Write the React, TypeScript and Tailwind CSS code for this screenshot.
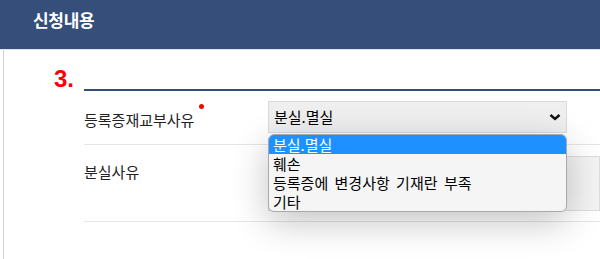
const KR = "font-['Noto_Sans_CJK_KR','Noto_Sans',sans-serif]";

const OPTIONS = ['분실.멸실', '훼손', '등록증에 변경사항 기재란 부족', '기타'];

export default function App() {
  return (
    <div className={`relative w-[600px] h-[259px] overflow-hidden bg-white ${KR}`}>
      <div className="h-[50px] bg-[#354e7a] border-b border-[#dde2ea] pl-[33px] pt-[10px]">
        <h2 className="text-white text-[17px] font-bold leading-[20px] tracking-[-0.3px]">신청내용</h2>
      </div>

      <div className="ml-[3px] border-l border-[#d4d4d4] h-[209px] pl-[50px]">
        <div className="flex items-end pt-[17px]">
          <span className="w-[30px] text-[#ff0000] text-[24px] font-bold leading-[24px] font-['Liberation_Sans',sans-serif]">3.</span>
          <div className="flex-1 border-b-2 border-[#354e7a]" />
        </div>

        <div className="ml-[30px]">
          <div className="flex items-center h-[54px] border-b border-[#e6e6e6]">
            <div className="w-[184px] shrink-0 pt-[3px]">
              <span className="relative text-[15px] leading-[20px] text-[#222]">
                등록증재교부사유
                <span className="absolute -right-[10px] -top-[5px] w-[5px] h-[5px] rounded-full bg-[#ff0000]" />
              </span>
            </div>
            <div className="w-[299px] h-[32px] mt-[-1px] flex items-center justify-between pl-[5px] pr-[3px] bg-[#efefef] border border-[#dadada] text-[15px] text-black">
              <span>분실.멸실</span>
              <svg width="14" height="8" viewBox="0 0 14 8" className="mr-[1px]">
                <polyline points="2.5,2 7,6 11.5,2" fill="none" stroke="#111" strokeWidth="2.4" />
              </svg>
            </div>
          </div>

          <div className="flex items-start pt-[11px] pb-[10px] border-b border-[#e6e6e6]">
            <div className="w-[184px] shrink-0 pt-[6px] text-[15px] leading-[20px] text-[#222]">분실사유</div>
            <div className="flex-1 h-[55px] bg-[#f3f3f3] border border-[#dcdcdc]" />
          </div>
        </div>
      </div>

      <ul className="absolute left-[268px] top-[134px] w-[299px] rounded-[6px] bg-[#f5f5f5] border border-[#a9a9a9] shadow-[0_10px_36px_rgba(0,0,0,0.24)] overflow-hidden text-[15px] text-black [word-spacing:3px]">
        {OPTIONS.map((o, i) => (
          <li
            key={o}
            className={
              i === 0
                ? 'h-[19px] pl-[4px] leading-[19px] bg-[#1e90ff] text-white'
                : 'h-[19px] pl-[4px] leading-[19px]'
            }
          >
            {o}
          </li>
        ))}
      </ul>
    </div>
  );
}
